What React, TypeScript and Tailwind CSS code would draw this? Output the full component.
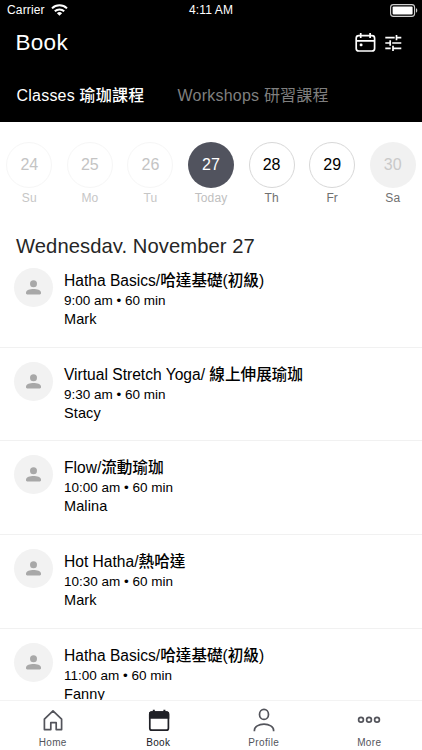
import type { ReactNode } from "react";

interface Day { date: number; label: string; state: "past" | "today" | "open" | "closed" }
interface ClassItem { title: string; time: string; teacher: string }

const DAYS: Day[] = [
    { date: 24, label: "Su", state: "past" },
    { date: 25, label: "Mo", state: "past" },
    { date: 26, label: "Tu", state: "past" },
    { date: 27, label: "Today", state: "today" },
    { date: 28, label: "Th", state: "open" },
    { date: 29, label: "Fr", state: "open" },
    { date: 30, label: "Sa", state: "closed" },
];

const CLASSES: ClassItem[] = [
    { title: "Hatha Basics/哈達基礎(初級)", time: "9:00 am • 60 min", teacher: "Mark" },
    { title: "Virtual Stretch Yoga/ 線上伸展瑜珈", time: "9:30 am • 60 min", teacher: "Stacy" },
    { title: "Flow/流動瑜珈", time: "10:00 am • 60 min", teacher: "Malina" },
    { title: "Hot Hatha/熱哈達", time: "10:30 am • 60 min", teacher: "Mark" },
    { title: "Hatha Basics/哈達基礎(初級)", time: "11:00 am • 60 min", teacher: "Fanny" },
];

const CIRCLE = {
    past: "border border-[#f6f6f6] text-[#c4c4c4]",
    today: "bg-[#51535e] text-white",
    open: "border border-[#d8d8d8] text-black",
    closed: "bg-[#f1f1f1] text-[#c9c9c9]",
};

const DAY_LABEL = {
    past: "text-[#c6c6c6]",
    today: "text-[#c0c0c0]",
    open: "text-[#707070]",
    closed: "text-[#707070]",
};

function StatusBar() {
    return (
        <div className="grid h-5 grid-cols-3 items-center pl-[7px] pr-1 text-[12px] leading-5 tracking-[0.15px]">
            <div className="flex items-center gap-[6px]">
                <span>Carrier</span>
                <svg width="17" height="12" viewBox="0 0 17 12" fill="none" stroke="currentColor" strokeWidth="2">
                    <path d="M1 4.4a10.8 10.8 0 0 1 15 0" />
                    <path d="M3.8 7.3a6.8 6.8 0 0 1 9.4 0" />
                    <path d="M8.5 11.8 5.9 9.2a3.8 3.8 0 0 1 5.2 0Z" fill="currentColor" stroke="none" />
                </svg>
            </div>
            <span className="-ml-[3px] text-center">4:11 AM</span>
            <svg className="ml-auto" width="28" height="13" viewBox="0 0 28 13">
                <rect x="0.6" y="0.6" width="24" height="11.8" rx="2.8" fill="none" stroke="#d0d0d0" strokeWidth="1.1" />
                <rect x="2.6" y="2.4" width="20" height="8.2" rx="1" fill="#fff" />
                <path d="M26 4.3c1.7.6 1.7 3.8 0 4.4Z" fill="#d0d0d0" />
            </svg>
        </div>
    );
}

function Header() {
    return (
        <header className="h-[122px] shrink-0 bg-black text-white">
            <StatusBar />
            <div className="flex h-[45px] items-center justify-between pl-[15.5px] pr-5">
                <h1 className="pt-0.5 text-[22.5px] leading-none tracking-[0.3px]">Book</h1>
                <div className="flex items-center gap-[9px]">
                    <svg width="21" height="20" viewBox="0 0 21 20" fill="none" stroke="currentColor" strokeWidth="1.7">
                        <rect x="1.2" y="2.6" width="18.4" height="15.4" rx="2.6" />
                        <path d="M1.2 7.8h18.4M5.7 0v5M15.1 0v5" />
                        <rect x="4.7" y="10.4" width="2.8" height="2.8" rx="1" fill="currentColor" stroke="none" />
                    </svg>
                    <svg width="17" height="18" viewBox="0 0 17 18" fill="none" stroke="currentColor" strokeWidth="1.7">
                        <path d="M.3 3.6h9.4M11.5.9v5.400M11.5 3.600h4.800M.3 9h4.900M5.200 6.300v5.400M7.200 9h9.100M.3 14.400h5.400M8 11.700v5.400M8 14.400h8.300" />
                    </svg>
                </div>
            </div>
            <nav className="flex h-[57px] items-center gap-[33px] pl-[16.5px] pt-1 text-[16px] leading-none tracking-[0.22px]">
                <span className="font-medium">Classes 瑜珈課程</span>
                <span className="text-[#7f7f7f]">Workshops 研習課程</span>
            </nav>
        </header>
    );
}

function DayButton({ day }: { day: Day }) {
    return (
        <button className="flex flex-1 flex-col items-center">
            <span className={`flex size-[46px] items-center justify-center rounded-full text-[16px] ${CIRCLE[day.state]}`}>{day.date}</span>
            <span className={`mt-[2.5px] text-[12px] leading-4 tracking-[0.1px] ${DAY_LABEL[day.state]}`}>{day.label}</span>
        </button>
    );
}

function ClassRow({ item }: { item: ClassItem }) {
    return (
        <li className="flex h-[93.7px] shrink-0 items-start gap-[11.5px] border-b border-[#f1f1f1] pl-[13.5px] pt-[14px] text-black">
            <span className="flex size-[39px] items-center justify-center rounded-full bg-[#f2f2f2]">
                <svg width="15" height="15" viewBox="0 0 15 15" fill="#a8a8a8">
                    <circle cx="7.5" cy="3.7" r="3.5" />
                    <path d="M0 12.6C0 10.1 4.1 9 7.5 9S15 10.1 15 12.6v.7c0 .7-.5 1.1-1.1 1.1H1.1C.5 14.4 0 14 0 13.3Z" />
                </svg>
            </span>
            <div className="flex flex-col pt-[2px]">
                <span className="text-[15.6px] font-medium leading-[21px]">{item.title}</span>
                <span className="text-[13.5px] leading-[19px]">{item.time}</span>
                <span className="text-[14.5px] leading-[18px] tracking-[0.1px]">{item.teacher}</span>
            </div>
        </li>
    );
}

function Tab({ label, active, children }: { label: string; active?: boolean; children: ReactNode }) {
    return (
        <button className={`flex flex-1 flex-col items-center pt-[7px] ${active ? "text-[#202127]" : "text-[#53545b]"}`}>
            <svg width="24" height="24" viewBox="0 0 24 24" fill="none" stroke="currentColor" strokeWidth="1.7">{children}</svg>
            <span className="mt-[5px] text-[10px] leading-3 tracking-[0.35px]">{label}</span>
        </button>
    );
}

export default function App() {
    return (
        <div className="flex h-[750px] w-[422px] flex-col overflow-hidden bg-white font-['Liberation_Sans','Noto_Sans_CJK_TC',sans-serif]">
            <Header />

            <div className="-ml-px flex h-[114px] w-[424px] shrink-0 pt-[19.5px]">
                {DAYS.map(d => <DayButton key={d.date} day={d} />)}
            </div>

            <div className="h-[17px] shrink-0 overflow-hidden pl-4">
                <h2 className="text-[20.2px] leading-5 tracking-[0.08px] text-[#262626]">Wednesday, November 27</h2>
            </div>

            <ul className="flex min-h-0 flex-1 flex-col overflow-hidden pt-px">
                {CLASSES.map(c => <ClassRow key={c.time} item={c} />)}
            </ul>

            <footer className="flex h-[50px] shrink-0 border-t border-[#f3f3f3] bg-white">
                <Tab label="Home">
                    <path d="M3.4 11.2 12 2.8l8.6 8.4v10.4h-5.4v-6.9H9.8v6.900H3.4Z" strokeLinejoin="round" />
                </Tab>
                <Tab label="Book" active>
                    <rect x="3.8" y="4.2" width="18.6" height="18" rx="2" />
                    <path d="M3.8 6.2a2 2 0 0 1 2-2h14.600a2 2 0 0 1 2 2v3.600H3.8Z" fill="currentColor" />
                    <path d="M7.800 1.800v3M18.400 1.800v3" strokeWidth="2" />
                </Tab>
                <Tab label="Profile">
                    <ellipse cx="12" cy="6.4" rx="4.500" ry="5" />
                    <path d="M2.400 23.200v-1c0-3.500 4.300-6 9.600-6s9.600 2.500 9.600 6v1" />
                </Tab>
                <Tab label="More">
                    <circle cx="4" cy="11.800" r="2.400" />
                    <circle cx="12" cy="11.800" r="2.400" />
                    <circle cx="20" cy="11.800" r="2.400" />
                </Tab>
            </footer>
        </div>
    );
}
